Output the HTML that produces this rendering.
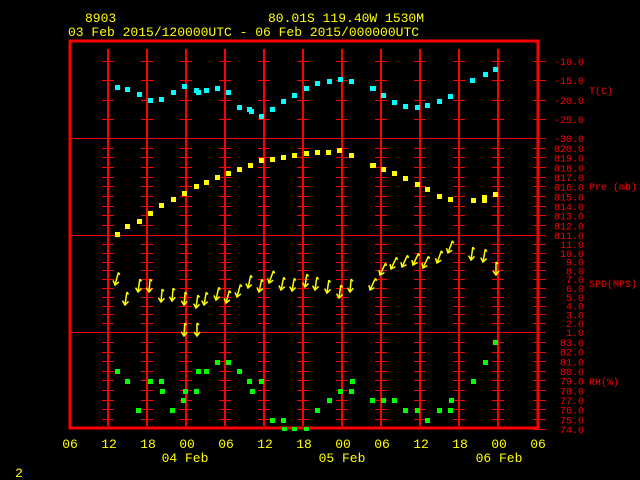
<!DOCTYPE html>
<html><head><meta charset="utf-8"><style>
html,body{margin:0;padding:0;background:#000;width:640px;height:480px;overflow:hidden}
svg{display:block}
text{font-family:"Liberation Mono",monospace}
</style></head><body>
<svg width="640" height="480" viewBox="0 0 640 480" xmlns="http://www.w3.org/2000/svg">
<defs>
<path id="col" stroke="#f00" stroke-width="1" shape-rendering="crispEdges" d="M0.5 49V426M1.5 49V426
M-5 61.5h12M-5 80.5h12M-5 100.5h12M-5 119.5h12
M-5 148.5h12M-5 157.5h12M-5 167.5h12M-5 177.5h12M-5 186.5h12M-5 196.5h12M-5 206.5h12M-5 215.5h12M-5 225.5h12
M-5 244.5h12M-5 253.5h12M-5 262.5h12M-5 270.5h12M-5 279.5h12M-5 288.5h12M-5 297.5h12M-5 306.5h12M-5 314.5h12M-5 323.5h12
M-5 342.5h12M-5 352.5h12M-5 361.5h12M-5 371.5h12M-5 380.5h12M-5 390.5h12M-5 400.5h12M-5 409.5h12M-5 419.5h12"/>
<g id="a" fill="none" stroke="#ff0" stroke-width="1.5"><path d="M0 0V-13M-3 -4L0 0L3 -4M0 -13l2 2"/></g>
</defs>
<g fill="#ff0" font-size="13">
<text x="85" y="22">8903</text>
<text x="268" y="22">80.01S  119.40W  1530M</text>
<text x="68" y="36">03 Feb 2015/120000UTC - 06 Feb 2015/000000UTC</text>
</g>
<use href="#col" x="107"/><use href="#col" x="146"/><use href="#col" x="185"/><use href="#col" x="224"/><use href="#col" x="263"/><use href="#col" x="302"/><use href="#col" x="341"/><use href="#col" x="380"/><use href="#col" x="419"/><use href="#col" x="458"/><use href="#col" x="497"/>
<path stroke="#f00" stroke-width="1" shape-rendering="crispEdges" d="M70 138.5H538M70 235.5H538M70 332.5H538"/>
<rect x="70" y="41" width="468" height="387" fill="none" stroke="#f00" stroke-width="3" shape-rendering="crispEdges"/>
<path stroke="#f00" stroke-width="1" shape-rendering="crispEdges" d="M533 61.5h13M533 80.5h13M533 100.5h13M533 119.5h13M533 138.5h13
M533 148.5h13M533 157.5h13M533 167.5h13M533 177.5h13M533 186.5h13M533 196.5h13M533 206.5h13M533 215.5h13M533 225.5h13M533 235.5h13
M533 244.5h13M533 253.5h13M533 262.5h13M533 270.5h13M533 279.5h13M533 288.5h13M533 297.5h13M533 306.5h13M533 314.5h13M533 323.5h13M533 332.5h13
M533 342.5h13M533 352.5h13M533 361.5h13M533 371.5h13M533 380.5h13M533 390.5h13M533 400.5h13M533 409.5h13M533 419.5h13M533 429.5h13"/>
<g fill="#f00" font-size="10" text-anchor="end">
<text x="584" y="65">-10.0</text><text x="584" y="84">-15.0</text><text x="584" y="104">-20.0</text><text x="584" y="123">-25.0</text><text x="584" y="142">-30.0</text>
<text x="584" y="152">820.0</text><text x="584" y="161.7">819.0</text><text x="584" y="171.3">818.0</text><text x="584" y="181">817.0</text><text x="584" y="190.7">816.0</text><text x="584" y="200.3">815.0</text><text x="584" y="210">814.0</text><text x="584" y="219.7">813.0</text><text x="584" y="229.3">812.0</text><text x="584" y="239">811.0</text>
<text x="584" y="248">11.0</text><text x="584" y="256.8">10.0</text><text x="584" y="265.6">9.0</text><text x="584" y="274.4">8.0</text><text x="584" y="283.2">7.0</text><text x="584" y="292">6.0</text><text x="584" y="300.8">5.0</text><text x="584" y="309.6">4.0</text><text x="584" y="318.4">3.0</text><text x="584" y="327.2">2.0</text><text x="584" y="336">1.0</text>
<text x="584" y="346">83.0</text><text x="584" y="355.7">82.0</text><text x="584" y="365.3">81.0</text><text x="584" y="375">80.0</text><text x="584" y="384.7">79.0</text><text x="584" y="394.3">78.0</text><text x="584" y="404">77.0</text><text x="584" y="413.7">76.0</text><text x="584" y="423.3">75.0</text><text x="584" y="433">74.0</text>
</g>
<g fill="#f00" font-size="10">
<text x="589" y="94">T(C)</text><text x="589" y="190">Pre (mb)</text><text x="589" y="287">SPD(MPS)</text><text x="589" y="385">RH(%)</text>
</g>
<g fill="#ff0" font-size="13" text-anchor="middle">
<text x="70" y="448">06</text><text x="109" y="448">12</text><text x="148" y="448">18</text><text x="187" y="448">00</text><text x="226" y="448">06</text><text x="265" y="448">12</text><text x="304" y="448">18</text><text x="343" y="448">00</text><text x="382" y="448">06</text><text x="421" y="448">12</text><text x="460" y="448">18</text><text x="499" y="448">00</text><text x="538" y="448">06</text>
<text x="185" y="462">04 Feb</text><text x="342" y="462">05 Feb</text><text x="499" y="462">06 Feb</text>
<text x="19" y="477">2</text>
</g>
<g fill="#0ff">
<rect x="115" y="85" width="5" height="5"/><rect x="125" y="87" width="5" height="5"/><rect x="137" y="92" width="5" height="5"/><rect x="148" y="98" width="5" height="5"/><rect x="159" y="97" width="5" height="5"/><rect x="171" y="90" width="5" height="5"/><rect x="182" y="84" width="5" height="5"/><rect x="194" y="88" width="5" height="5"/><rect x="196" y="90" width="5" height="5"/><rect x="204" y="88" width="5" height="5"/><rect x="215" y="86" width="5" height="5"/><rect x="226" y="90" width="5" height="5"/><rect x="237" y="105" width="5" height="5"/><rect x="247" y="107" width="5" height="5"/><rect x="249" y="109" width="5" height="5"/><rect x="259" y="114" width="5" height="5"/><rect x="270" y="107" width="5" height="5"/><rect x="281" y="99" width="5" height="5"/><rect x="292" y="93" width="5" height="5"/><rect x="304" y="86" width="5" height="5"/><rect x="315" y="81" width="5" height="5"/><rect x="327" y="79" width="5" height="5"/><rect x="338" y="77" width="5" height="5"/><rect x="349" y="79" width="5" height="5"/><rect x="370" y="86" width="6" height="5"/><rect x="381" y="93" width="5" height="5"/><rect x="392" y="100" width="5" height="5"/><rect x="403" y="104" width="5" height="5"/><rect x="415" y="105" width="5" height="5"/><rect x="425" y="103" width="5" height="5"/><rect x="437" y="99" width="5" height="5"/><rect x="448" y="94" width="5" height="5"/><rect x="470" y="78" width="5" height="5"/><rect x="483" y="72" width="5" height="5"/><rect x="493" y="67" width="5" height="5"/>
</g>
<g fill="#ff0">
<rect x="115" y="232" width="5" height="5"/><rect x="125" y="224" width="5" height="5"/><rect x="137" y="219" width="5" height="5"/><rect x="148" y="211" width="5" height="5"/><rect x="159" y="203" width="5" height="5"/><rect x="171" y="197" width="5" height="5"/><rect x="182" y="191" width="5" height="5"/><rect x="194" y="184" width="5" height="5"/><rect x="204" y="180" width="5" height="5"/><rect x="215" y="175" width="5" height="5"/><rect x="226" y="171" width="5" height="5"/><rect x="237" y="167" width="5" height="5"/><rect x="248" y="163" width="5" height="5"/><rect x="259" y="158" width="5" height="5"/><rect x="270" y="157" width="5" height="5"/><rect x="281" y="155" width="5" height="5"/><rect x="292" y="153" width="5" height="5"/><rect x="304" y="151" width="5" height="5"/><rect x="315" y="150" width="5" height="5"/><rect x="326" y="150" width="5" height="5"/><rect x="337" y="148" width="5" height="5"/><rect x="349" y="153" width="5" height="5"/><rect x="370" y="163" width="6" height="5"/><rect x="381" y="167" width="5" height="5"/><rect x="392" y="171" width="5" height="5"/><rect x="403" y="176" width="5" height="5"/><rect x="415" y="182" width="5" height="5"/><rect x="425" y="187" width="5" height="5"/><rect x="437" y="194" width="5" height="5"/><rect x="448" y="197" width="5" height="5"/><rect x="471" y="198" width="5" height="5"/><rect x="482" y="195" width="5" height="8"/><rect x="493" y="192" width="5" height="5"/>
</g>
<use href="#a" transform="translate(115,285) rotate(15)"/><use href="#a" transform="translate(125,305) rotate(8)"/><use href="#a" transform="translate(138,292) rotate(8)"/><use href="#a" transform="translate(149,292) rotate(5)"/><use href="#a" transform="translate(161,302) rotate(5)"/><use href="#a" transform="translate(172,301) rotate(5)"/><use href="#a" transform="translate(184,305) rotate(5)"/><use href="#a" transform="translate(196,308) rotate(8)"/><use href="#a" transform="translate(204,305) rotate(10)"/><use href="#a" transform="translate(216,300) rotate(12)"/><use href="#a" transform="translate(226,303) rotate(15)"/><use href="#a" transform="translate(237,297) rotate(15)"/><use href="#a" transform="translate(248,288) rotate(12)"/><use href="#a" transform="translate(259,292) rotate(12)"/><use href="#a" transform="translate(269,283) rotate(20)"/><use href="#a" transform="translate(281,290) rotate(12)"/><use href="#a" transform="translate(292,291) rotate(10)"/><use href="#a" transform="translate(305,287) rotate(8)"/><use href="#a" transform="translate(315,290) rotate(8)"/><use href="#a" transform="translate(327,293) rotate(8)"/><use href="#a" transform="translate(339,298) rotate(8)"/><use href="#a" transform="translate(350,292) rotate(5)"/><use href="#a" transform="translate(370,290) rotate(25)"/><use href="#a" transform="translate(380,275) rotate(25)"/><use href="#a" transform="translate(391,269) rotate(25)"/><use href="#a" transform="translate(402,267) rotate(25)"/><use href="#a" transform="translate(413,265) rotate(25)"/><use href="#a" transform="translate(423,268) rotate(25)"/><use href="#a" transform="translate(437,263) rotate(20)"/><use href="#a" transform="translate(448,253) rotate(20)"/><use href="#a" transform="translate(471,260) rotate(8)"/><use href="#a" transform="translate(483,262) rotate(10)"/><use href="#a" transform="translate(496,275) rotate(0)"/><use href="#a" transform="translate(184,336) rotate(3)"/><use href="#a" transform="translate(197,336) rotate(0)"/>
<g fill="#0f0">
<rect x="115" y="369" width="5" height="5"/><rect x="125" y="379" width="5" height="5"/><rect x="136" y="408" width="5" height="5"/><rect x="148" y="379" width="5" height="5"/><rect x="159" y="379" width="5" height="5"/><rect x="160" y="389" width="5" height="5"/><rect x="170" y="408" width="5" height="5"/><rect x="181" y="398" width="5" height="5"/><rect x="183" y="389" width="5" height="5"/><rect x="194" y="389" width="5" height="5"/><rect x="196" y="369" width="5" height="5"/><rect x="204" y="369" width="5" height="5"/><rect x="215" y="360" width="5" height="5"/><rect x="226" y="360" width="5" height="5"/><rect x="237" y="369" width="5" height="5"/><rect x="247" y="379" width="5" height="5"/><rect x="250" y="389" width="5" height="5"/><rect x="259" y="379" width="5" height="5"/><rect x="270" y="418" width="5" height="5"/><rect x="281" y="418" width="5" height="5"/><rect x="282" y="427" width="5" height="4"/><rect x="292" y="427" width="5" height="4"/><rect x="304" y="427" width="5" height="4"/><rect x="315" y="408" width="5" height="5"/><rect x="327" y="398" width="5" height="5"/><rect x="338" y="389" width="5" height="5"/><rect x="349" y="389" width="5" height="5"/><rect x="350" y="379" width="5" height="5"/><rect x="370" y="398" width="5" height="5"/><rect x="381" y="398" width="5" height="5"/><rect x="392" y="398" width="5" height="5"/><rect x="403" y="408" width="5" height="5"/><rect x="415" y="408" width="5" height="5"/><rect x="425" y="418" width="5" height="5"/><rect x="437" y="408" width="5" height="5"/><rect x="448" y="408" width="5" height="5"/><rect x="449" y="398" width="5" height="5"/><rect x="471" y="379" width="5" height="5"/><rect x="483" y="360" width="5" height="5"/><rect x="493" y="340" width="5" height="5"/>
</g>
</svg>
</body></html>
